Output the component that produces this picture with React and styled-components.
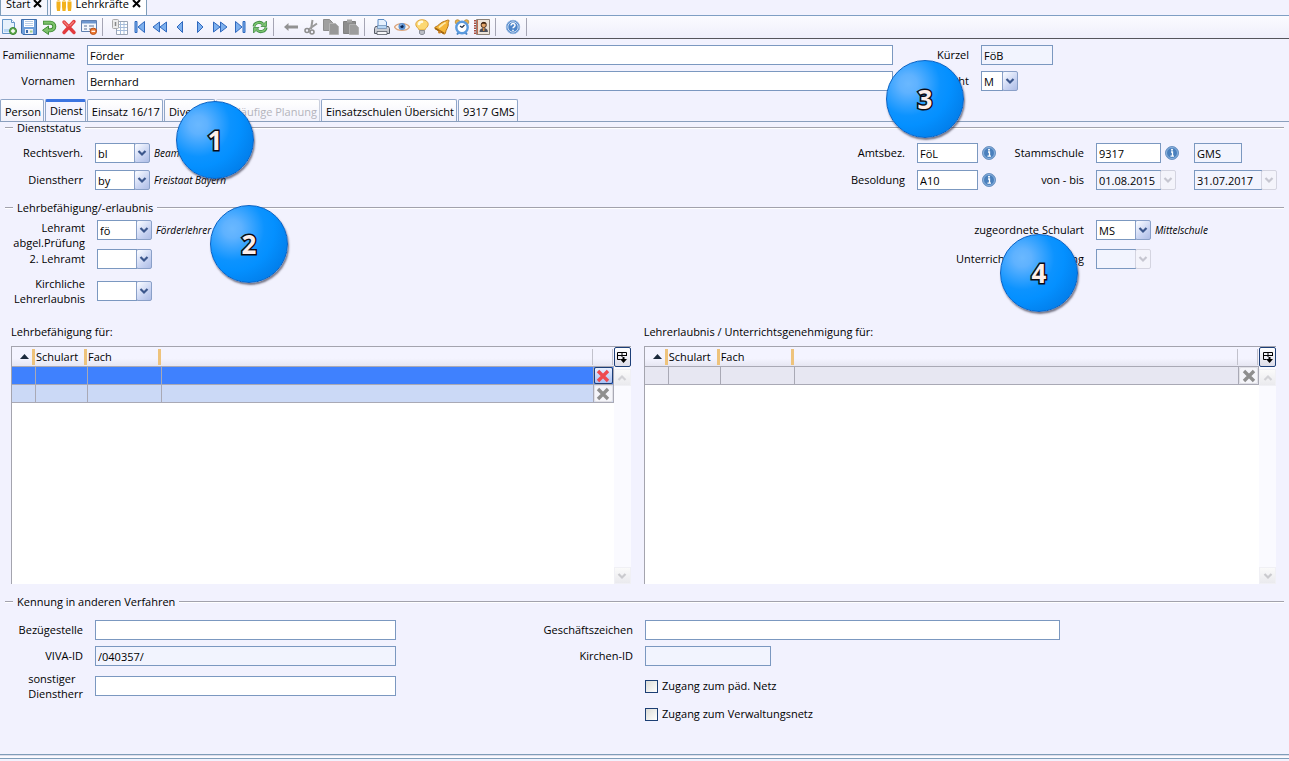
import React from 'react';
import styled, { createGlobalStyle } from 'styled-components';

const GlobalStyle = createGlobalStyle`
  * {
    box-sizing: border-box;
  }
  body {
    margin: 0;
    background: #f2f2fe;
  }
  body, input, select, button, table {
    font-family: "Open Sans", "Noto Sans", sans-serif;
    font-size: 11px;
    color: #000;
  }
`;

const Page = styled.div`
  position: relative;
  min-height: 100vh;
  display: flex;
  flex-direction: column;
  overflow: hidden;
`;

/* open windows */
const WindowTabs = styled.nav`
  display: flex;
  align-items: flex-end;
  gap: 2px;
  height: 15px;
  overflow: hidden;
`;
const WindowTab = styled.div`
  display: flex;
  align-items: center;
  gap: 3px;
  height: 24px;
  padding: 0 5px;
  background: ${({ $active }) => ($active ? '#fff' : '#f6f6fd')};
  border: 1px solid #7f9db9;
  border-bottom: none;
`;
const CloseButton = styled.button`
  display: flex;
  padding: 0;
  border: none;
  background: none;
`;

/* toolbar */
const Toolbar = styled.div`
  display: flex;
  align-items: center;
  height: 24px;
  border-top: 1px solid #7f9fc4;
  border-bottom: 1px solid #55555c;
  background: linear-gradient(#fbfbff, #efeffb);
`;
const ToolButton = styled.button`
  display: flex;
  align-items: center;
  justify-content: flex-start;
  width: 20px;
  height: 20px;
  padding: 0 0 0 1px;
  border: none;
  background: none;
`;
const Separator = styled.span`
  width: 1px;
  height: 18px;
  margin: 0 8px 0 2px;
  background: #a5a5b4;
`;

/* form parts */
const HeaderForm = styled.div`
  display: grid;
  grid-template-columns: 75px minmax(0, 1fr) 64px 308px;
  column-gap: 12px;
  row-gap: 6px;
  padding: 6px 0 8px;
`;
const Label = styled.label`
  justify-self: end;
  align-self: ${({ $stacked }) => ($stacked ? 'center' : 'auto')};
  text-align: ${({ $left }) => ($left ? 'left' : 'right')};
  line-height: ${({ $stacked }) => ($stacked ? '15px' : '20px')};
  white-space: nowrap;
`;
const TextInput = styled.input`
  width: ${({ $width }) => $width || '100%'};
  max-width: 100%;
  height: 20px;
  padding: 0 2px;
  border: 1px solid #7b98c0;
  border-radius: 0;
  outline: none;
  background: ${({ readOnly }) => (readOnly ? '#f2f4fe' : '#fff')};
`;
const Field = styled.div`
  display: flex;
  align-items: center;
  align-self: ${({ $center }) => ($center ? 'center' : 'auto')};
  gap: ${({ $tight }) => ($tight ? '3px' : '4px')};
  height: 20px;
`;
const ComboWrap = styled.span`
  display: grid;
  width: ${({ $width }) => $width};
  height: 20px;
`;
const ComboSelect = styled.select`
  grid-area: 1 / 1;
  appearance: none;
  width: calc(100% - 15px);
  height: 20px;
  padding: 0 2px;
  border: 1px solid #7b98c0;
  border-radius: 0;
  outline: none;
  opacity: 1;
  color: #000;
  background: ${({ disabled }) => (disabled ? '#f2f4fe' : '#fff')};
`;
const ComboArrow = styled.span`
  grid-area: 1 / 1;
  justify-self: end;
  display: flex;
  align-items: center;
  justify-content: center;
  width: 16px;
  height: 20px;
  pointer-events: none;
  border: 1px solid ${({ $off }) => ($off ? '#d4d4e0' : '#8aa0c8')};
  border-radius: 2px;
  background: ${({ $off }) =>
    $off ? '#f4f4fb' : 'linear-gradient(135deg, #f4f7ff 10%, #c9d4f2 60%, #aebde6)'};
`;
const Hint = styled.span`
  font-size: 10px;
  font-style: italic;
  white-space: nowrap;
`;
const InfoButton = styled.button`
  display: flex;
  padding: 0;
  border: none;
  background: none;
`;

/* register tabs */
const TabBar = styled.div`
  display: flex;
  gap: 1px;
  height: 22px;
`;
const Tab = styled.button`
  height: 22px;
  padding: ${({ $active }) => ($active ? '0 2px 3px 4px' : '2px 2px 0 4px')};
  border: 1px solid #8fa6c8;
  border-bottom: none;
  border-top: ${({ $active }) => ($active ? '3px solid #3b74e0' : '1px solid #8fa6c8')};
  border-radius: 2px 2px 0 0;
  background: ${({ $active }) => ($active ? '#f4f4ff' : 'linear-gradient(#fff, #f2f2fb)')};
  white-space: nowrap;

  &:disabled {
    color: #b4b4bc;
    border-color: #c9cfdd;
  }
`;
const Pane = styled.main`
  flex: 1;
  display: flex;
  flex-direction: column;
  gap: 12px;
  border-top: 1px solid #8a9fbd;
`;

const Section = styled.fieldset`
  min-width: 0;
  margin: 0;
  padding: 0 0 0 5px;
  border: none;
`;
const Legend = styled.legend`
  width: 100%;
  padding: 0 5px 1px 0;
`;
const LegendRow = styled.span`
  display: flex;
  align-items: center;
  gap: 4px;
  line-height: 12px;

  &::before,
  &::after {
    content: "";
    width: 8px;
    height: 1px;
    background: #a2a2ac;
    border-bottom: 1px solid #fff;
  }
  &::after {
    flex: 1;
  }
`;
const StatusGrid = styled.div`
  display: grid;
  grid-template-columns: 78px minmax(0, 1fr) 80px 80px 75px 86px 95px;
  column-gap: 12px;
  row-gap: 7px;
  padding-top: 8px;
`;
const TeachingGrid = styled.div`
  display: grid;
  grid-template-columns: 80px minmax(0, 1fr) 150px 193px;
  grid-template-rows: 29px 27px 30px;
  column-gap: 12px;
  align-items: start;
  padding-top: 5px;
`;
const IdGrid = styled.div`
  display: grid;
  grid-template-columns: 78px minmax(0, 301px) 225px minmax(0, 1fr);
  grid-template-rows: 20px 20px 28px 16px;
  column-gap: 12px;
  row-gap: 6px;
  align-items: center;
  padding-top: 11px;
`;
const CheckLabel = styled.label`
  grid-column: 4;
  display: flex;
  align-items: center;
  gap: 4px;
  line-height: 14px;
`;
const CheckBox = styled.input`
  appearance: none;
  width: 13px;
  height: 13px;
  margin: 0;
  border: 1px solid #1c3f74;
  background: linear-gradient(135deg, #dcdcd6, #fff);
`;

/* subject lists */
const Lists = styled.div`
  display: grid;
  grid-template-columns: 49fr 50fr;
  gap: 13px;
  padding: 6px 13px 0 11px;
`;
const ListTitle = styled.h2`
  margin: 0 0 6px;
  font-size: 11px;
  font-weight: 400;
  line-height: 16px;
`;
const ListBox = styled.div`
  display: flex;
  align-items: flex-start;
  height: 238px;
  border-left: 1px solid #a4a4ae;
  border-top: 1px solid #a4a4ae;
  background: #fff;
`;
const Table = styled.table`
  flex: 1;
  min-width: 0;
  table-layout: fixed;
  border-spacing: 0;
`;
const HeadCell = styled.th`
  width: ${({ $width }) => $width};
  height: 20px;
  padding: 0 1px 0 0;
  font-weight: 400;
  text-align: left;
  line-height: 14px;
  white-space: nowrap;
  background: linear-gradient(#f4f4ff 60%, #e6e6f2);
  border-bottom: 1px solid #a9a9b5;
`;
const HeadInner = styled.span`
  display: flex;
  align-items: center;
  justify-content: ${({ $end }) => ($end ? 'flex-end' : 'space-between')};
  gap: 3px;
  height: 16px;
  border-right: ${({ $bar }) =>
    $bar === 'orange' ? '3px solid #eec37c' : '1px solid #c2c2cc'};
`;
const Cell = styled.td`
  height: 18px;
  padding: 0;
  border-right: 1px solid #a9a9b5;
  border-bottom: 1px solid #a9a9b5;
`;
const Row = styled.tr`
  background: ${({ $tone }) =>
    ({ selected: '#3f81fe', light: '#cbd9f6', plain: '#e7e7f2' })[$tone]};
`;
const DeleteButton = styled.button`
  display: flex;
  align-items: center;
  justify-content: center;
  width: 100%;
  height: 17px;
  padding: 0;
  border: 1px solid ${({ $active }) => ($active ? '#1d3f78' : '#e0e0e6')};
  border-radius: 2px;
  background: ${({ $active }) => ($active ? 'linear-gradient(#e8efff, #a9c1f4)' : '#f5f5fa')};
`;
const ScrollBar = styled.div`
  display: flex;
  flex-direction: column;
  justify-content: space-between;
  width: 17px;
  height: 100%;
  background: #fafaff;
`;
const PickerButton = styled.button`
  display: flex;
  align-items: center;
  justify-content: center;
  width: 17px;
  height: 20px;
  padding: 0;
  border: 1px solid #1d3f78;
  border-radius: 2px;
  background: linear-gradient(#fff, #dcdce8);
`;
const ScrollButton = styled.button`
  display: flex;
  align-items: center;
  justify-content: center;
  width: 17px;
  height: 17px;
  padding: 0;
  border: 1px solid #f0f0f5;
  background: linear-gradient(#fafafa, #eaeaee);
`;
const ScrollTop = styled.div`
  display: flex;
  flex-direction: column;
  gap: 2px;
`;

const StatusBar = styled.footer`
  height: 7px;
  border-top: 1px solid #7f9db9;
  background: linear-gradient(#dcdcea 0 1px, #fafaff 1px 3px, #7f9db9 3px 4px, #f2f2fe 4px);
`;

/* numbered callouts lie over the form */
const Marker = styled.span`
  position: absolute;
  top: ${({ $top }) => $top};
  left: ${({ $left }) => $left || 'auto'};
  right: ${({ $right }) => $right || 'auto'};
  display: flex;
  align-items: center;
  justify-content: center;
  width: 78px;
  height: 78px;
  border: 1px solid #0a62c4;
  border-radius: 50%;
  background: radial-gradient(circle at 28% 30%, #6ab8ff 0, #5fb2ff 12%, #0c93ff 42%, #0490ff 55%, #0070da 100%);
  box-shadow: 1px 2px 2px rgba(40, 40, 60, 0.6);
  color: #fdeeea;
  font-size: 26px;
  font-weight: 700;
  line-height: 26px;
  -webkit-text-stroke: 3px #0b0b14;
  paint-order: stroke fill;
`;

const Svg = ({ children, size = 16 }) => (
  <svg width={size} height={size} viewBox="0 0 16 16" fill="none" aria-hidden="true">
    {children}
  </svg>
);

const NavShape = ({ d, bar }) => (
  <Svg>
    <path d={d} fill="#7db0ee" stroke="#2f68bd" strokeWidth="1" strokeLinejoin="round" />
    {bar && <path d={bar} fill="#7db0ee" stroke="#2f68bd" strokeWidth="1" />}
  </Svg>
);

const icons = {
  new: (
    <Svg>
      <path d="M1.5 .5h9l3 3v11h-12z" fill="#e6f1fc" stroke="#6495c8" />
      <path d="M10.5.5v3h3" fill="#fff" stroke="#6495c8" />
      <path d="M3 10h9v3H3z" fill="#b9d7f5" />
      <circle cx="12" cy="12" r="3.500" fill="#6ab256" stroke="#34802d" />
      <path d="M12 10v4M10 12h4" stroke="#fff" strokeWidth="1.400" />
    </Svg>
  ),
  save: (
    <Svg>
      <path d="M.5.5h15v15H2l-1.500-1.500z" fill="#6f9fdb" stroke="#3c6cab" />
      <path d="M3 1h10v7H3z" fill="#fff" />
      <path d="M4 2.500h8M4 4.500h8M4 6.500h8" stroke="#b9cde6" />
      <path d="M4 10h8v5H4z" fill="#f0f2f6" />
      <path d="M5 11h2v3H5z" fill="#3d6cab" />
      <path d="M9 11.500h2.500v2H9z" fill="#a6d38c" />
    </Svg>
  ),
  undo: (
    <Svg>
      <path d="M2 3.700h7.500a3.800 3.800 0 0 1 0 7.600H7" stroke="#3f8b35" strokeWidth="4" />
      <path d="M7.500 7v8.500L1.500 11.300z" fill="#7cc26a" stroke="#3f8b35" />
      <path d="M2.700 3.700h6.800a3.800 3.800 0 0 1 0 7.600H6" stroke="#7cc26a" strokeWidth="2.200" />
    </Svg>
  ),
  remove: (
    <Svg>
      <path d="M3 3l10 10.500M13 2.500L3 13.500" stroke="#e23b3e" strokeWidth="3.400" strokeLinecap="round" />
      <path d="M3 3l4 4M12.500 3L9 6.500" stroke="#f2807c" strokeWidth="1.200" strokeLinecap="round" />
    </Svg>
  ),
  formRemove: (
    <Svg>
      <path d="M.5 1.500h15v11H.5z" fill="#f4f7fc" stroke="#6080b0" />
      <path d="M1 2h14v2.500H1z" fill="#6d96cf" />
      <path d="M3 7h3M8 7h5M3 10h3M8 10h2" stroke="#8c9db8" strokeWidth="1.500" />
      <circle cx="12.300" cy="12.300" r="3.200" fill="#ee7a31" stroke="#b8501a" />
      <path d="M10.500 12.300h3.600" stroke="#fff" strokeWidth="1.300" />
    </Svg>
  ),
  list: (
    <Svg>
      <path d="M4.500 2.500h11v13h-11z" fill="#fff" stroke="#9aa4b4" />
      <path d="M5 5.500h10M5 8.500h10M5 11.500h10M8.500 3v12M12 3v12" stroke="#a6bcda" />
      <rect x=".5" y=".5" width="6" height="9" rx="1" fill="#ececec" stroke="#a9a9a9" />
      <path d="M3.500 3v4" stroke="#888" strokeWidth="1.500" />
    </Svg>
  ),
  first: <NavShape bar="M3 2.500h2v11H3z" d="M12.500 2.500v11L6 8z" />,
  rewind: <NavShape d="M7.500 3v10L1 8zM14.500 3v10L8 8z" />,
  prev: <NavShape d="M10.500 2.500v11L5 8z" />,
  next: <NavShape d="M5.500 2.500v11L11 8z" />,
  forward: <NavShape d="M1.500 3v10L8 8zM8.500 3v10L15 8z" />,
  last: <NavShape bar="M11 2.500h2v11h-2z" d="M3.500 2.500v11L10 8z" />,
  refresh: (
    <Svg>
      <path d="M2 7.500c.5-4 6-5.500 9-2.500" stroke="#3f8b45" strokeWidth="3" />
      <path d="M14.500 2v5.500H9z" fill="#7cc570" stroke="#3f8b45" strokeWidth=".8" />
      <path d="M2.300 7.300c.5-3.800 5.700-5.100 8.700-2.300" stroke="#7cc570" strokeWidth="1.500" />
      <path d="M14 8.500c-.5 4-6 5.500-9 2.500" stroke="#3f8b45" strokeWidth="3" />
      <path d="M1.500 14V8.500H7z" fill="#7cc570" stroke="#3f8b45" strokeWidth=".8" />
      <path d="M13.700 8.700c-.5 3.800-5.700 5.100-8.700 2.300" stroke="#7cc570" strokeWidth="1.500" />
    </Svg>
  ),
  back: (
    <Svg>
      <path d="M1 8l4.500-4v2.500H15v3H5.500V12z" fill="#929292" />
    </Svg>
  ),
  cut: (
    <Svg>
      <path d="M9.500 1L8 10M14 4.500L5.500 10.500" stroke="#9a9a9a" strokeWidth="2" />
      <circle cx="4" cy="11.500" r="2" stroke="#8d8d8d" strokeWidth="1.600" />
      <circle cx="9" cy="13" r="2" stroke="#8d8d8d" strokeWidth="1.600" />
    </Svg>
  ),
  copy: (
    <Svg>
      <path d="M.5.5h6l3 3v8h-9z" fill="#a0a0a0" stroke="#8c8c8c" />
      <path d="M6.500 4.500h6l3 3v8h-9z" fill="#989898" stroke="#b4b4b4" />
    </Svg>
  ),
  paste: (
    <Svg>
      <path d="M.5 2.500h12v12H.5z" fill="#8d8d8d" stroke="#808080" />
      <path d="M4 .5h5v3H4z" fill="#a5a5a5" />
      <path d="M6.500 5.500h6l3 3v7h-9z" fill="#9d9d9d" stroke="#b0b0b0" />
    </Svg>
  ),
  print: (
    <Svg>
      <path d="M4 .5h6l2.500 2.500v6H4z" fill="#e6f1fd" stroke="#5b8bc5" />
      <path d="M1.500 7.500h13l1 2v5H.5v-5z" fill="#c9ccd2" stroke="#565b66" />
      <path d="M3.500 6.500h9v3h-9z" fill="#b7d7f5" stroke="#6a8ab0" strokeWidth=".7" />
      <path d="M3 12.500h10v3H3z" fill="#f6f6f8" stroke="#565b66" strokeWidth=".8" />
    </Svg>
  ),
  eye: (
    <Svg>
      <path d="M.5 8C3 3.500 13 3.500 15.500 8 13 12.500 3 12.500.5 8z" fill="#fdf3ea" stroke="#dba67e" strokeWidth="1.400" />
      <circle cx="8" cy="7.500" r="3.500" fill="#5c92d3" />
      <circle cx="8" cy="7.500" r="1.600" fill="#0c2450" />
      <path d="M6.500 6h1" stroke="#fff" />
    </Svg>
  ),
  bulb: (
    <Svg>
      <path d="M8 .8c4.200 0 6.200 2.300 6.200 4.600 0 2.600-2.600 3.400-3.400 5.600H5.200C4.400 8.800 1.800 8 1.800 5.400 1.800 3.100 3.800.8 8 .8z" fill="#fcd873" stroke="#dca13a" />
      <path d="M5 5c.3-1.500 1.500-2.300 3-2.300" stroke="#fffbe6" strokeWidth="2.600" strokeLinecap="round" />
      <path d="M5.500 11.500h5v3l-1.500 1H7l-1.500-1z" fill="#b9bcc4" stroke="#777c88" strokeWidth=".8" />
    </Svg>
  ),
  bell: (
    <Svg>
      <path d="M14.800 1.200c-1.500-.6-2.300.6-4 1C6.500 3 4.500 7 1 8.200c-.6.600-.3 1.300.4 1.700l8.300 4.900c.8.400 1.500.2 1.700-.6.300-3.700 3.300-5.700 2.900-9.700-.1-1.600 1.200-2.400.5-3.300z" fill="#f5b638" stroke="#b5761a" />
      <path d="M1.200 9.200l9 5.300" stroke="#9f6412" strokeWidth="1.600" />
      <circle cx="5.500" cy="13" r="1.500" fill="#c97f22" />
      <path d="M5.500 8c2-1.200 3.200-3.200 5.500-4" stroke="#fde9a8" strokeWidth="1.800" strokeLinecap="round" />
    </Svg>
  ),
  clock: (
    <Svg>
      <circle cx="3.500" cy="3" r="2.300" fill="#e9b04a" stroke="#a87c2c" strokeWidth=".7" />
      <circle cx="12.500" cy="3" r="2.300" fill="#e9b04a" stroke="#a87c2c" strokeWidth=".7" />
      <path d="M3 15.500l2-2.500M13 15.500l-2-2.500" stroke="#4b84c4" strokeWidth="2" />
      <circle cx="8" cy="8.500" r="5.700" fill="#fff" stroke="#5a9ade" strokeWidth="2.400" />
      <path d="M8 8.500L10.500 6M8 8.500L6 7" stroke="#22334c" strokeWidth="1.200" />
    </Svg>
  ),
  contact: (
    <Svg>
      <path d="M2.500.5h13v15h-13z" fill="#ece4da" stroke="#8b8178" />
      <path d="M1 1v14.500" stroke="#a33a2b" strokeWidth="1.800" strokeDasharray="1.500 1" />
      <path d="M3.500 1v14" stroke="#c1694f" />
      <circle cx="9.700" cy="6" r="2.600" fill="#e0a468" stroke="#53331d" />
      <path d="M7 4.700c1-2.400 5-2.400 5.500 0z" fill="#40240f" />
      <path d="M5.500 13c0-3 2-4 4.200-4s4.200 1 4.200 4z" fill="#4b4e5a" />
      <path d="M9.700 9v3" stroke="#d98a3a" strokeWidth="1.500" />
    </Svg>
  ),
  help: (
    <Svg>
      <circle cx="8" cy="8" r="6.700" fill="#4d85c9" stroke="#8fb2de" />
      <circle cx="8" cy="8" r="5.200" stroke="#dbe8f7" strokeWidth=".9" />
      <path d="M6 6.500c0-2.700 4.200-2.500 4 0-.1 1.300-2 1.300-2 2.800M8 10.700v1.300" stroke="#fff" strokeWidth="1.500" />
    </Svg>
  ),
};

const toolGroups = [
  [['new', 'Neu'], ['save', 'Speichern'], ['undo', 'Rückgängig'], ['remove', 'Löschen'], ['formRemove', 'Maske leeren']],
  [['list', 'Liste'], ['first', 'Erster'], ['rewind', 'Zurückspulen'], ['prev', 'Vorheriger'], ['next', 'Nächster'], ['forward', 'Vorspulen'], ['last', 'Letzter'], ['refresh', 'Aktualisieren']],
  [['back', 'Zurück'], ['cut', 'Ausschneiden'], ['copy', 'Kopieren'], ['paste', 'Einfügen']],
  [['print', 'Drucken'], ['eye', 'Ansicht'], ['bulb', 'Hinweis'], ['bell', 'Meldungen'], ['clock', 'Wiedervorlage'], ['contact', 'Adressbuch']],
  [['help', 'Hilfe']],
];

const CloseIcon = () => (
  <svg width="9" height="9" viewBox="0 0 9 9" aria-hidden="true">
    <path d="M1 1l7 7M8 1L1 8" stroke="#000" strokeWidth="2" />
  </svg>
);

const PeopleIcon = () => (
  <svg width="16" height="14" viewBox="0 0 16 14" fill="#f3b21c" aria-hidden="true">
    <circle cx="2.500" cy="2" r="1.800" />
    <circle cx="8" cy="2" r="1.800" />
    <circle cx="13.500" cy="2" r="1.800" />
    <path d="M.5 4.500h4V10l-.5 4H1L.5 10zM6 4.500h4V10l-.5 4h-3L6 10zM11.500 4.500h4V10l-.5 4h-3l-.5-4z" />
  </svg>
);

const Chevron = ({ color, up }) => (
  <svg width="10" height="8" viewBox="0 0 10 8" fill="none" aria-hidden="true">
    <path d={up ? 'M1.500 6L5 2.500 8.500 6' : 'M1.500 2L5 5.500 8.500 2'} stroke={color} strokeWidth="2.200" />
  </svg>
);

const Info = ({ label }) => (
  <InfoButton type="button" aria-label={label}>
    <Svg>
      <circle cx="8" cy="8" r="6.500" fill="#4a80bd" stroke="#6d93c2" />
      <circle cx="8" cy="8" r="5.500" stroke="#9dc0e6" strokeWidth=".8" />
      <path d="M7 7h1.500v4M6.500 11.200h3.500" stroke="#fff" strokeWidth="1.300" />
      <circle cx="8" cy="4.700" r="1" fill="#fff" />
    </Svg>
  </InfoButton>
);

const Combo = ({ id, value = '', width = '55px', disabled, label }) => (
  <ComboWrap $width={width}>
    <ComboSelect id={id} defaultValue={value} disabled={disabled} aria-label={label}>
      <option value={value}>{value}</option>
    </ComboSelect>
    <ComboArrow $off={disabled}>
      <Chevron color={disabled ? '#c6c6d0' : '#3c578c'} />
    </ComboArrow>
  </ComboWrap>
);

const Group = ({ title, children }) => (
  <Section>
    <Legend>
      <LegendRow>{title}</LegendRow>
    </Legend>
    {children}
  </Section>
);

const SubjectList = ({ title, rows }) => (
  <section>
    <ListTitle>{title}</ListTitle>
    <ListBox>
      <Table aria-label={title}>
        <thead>
          <tr>
            <HeadCell $width="24px">
              <HeadInner $bar="orange" $end>
                <svg width="9" height="5" viewBox="0 0 9 5" aria-hidden="true">
                  <path d="M0 5L4.500 0 9 5z" fill="#1b2a3c" />
                </svg>
                <span />
              </HeadInner>
            </HeadCell>
            <HeadCell $width="52px"><HeadInner $bar="orange">Schulart</HeadInner></HeadCell>
            <HeadCell $width="74px"><HeadInner $bar="orange">Fach</HeadInner></HeadCell>
            <HeadCell><HeadInner /></HeadCell>
            <HeadCell $width="20px"><HeadInner /></HeadCell>
          </tr>
        </thead>
        <tbody>
          {rows.map((tone) => (
            <Row key={tone} $tone={tone}>
              <Cell />
              <Cell />
              <Cell />
              <Cell />
              <Cell>
                <DeleteButton type="button" $active={tone === 'selected'} aria-label="Zeile löschen">
                  <svg width="14" height="14" viewBox="0 0 14 14" aria-hidden="true">
                    <path
                      d="M2 2l10 10M12 2L2 12"
                      stroke={tone === 'selected' ? '#ee4a50' : '#8e8e8e'}
                      strokeWidth="3.400"
                    />
                  </svg>
                </DeleteButton>
              </Cell>
            </Row>
          ))}
        </tbody>
      </Table>
      <ScrollBar>
        <ScrollTop>
          <PickerButton type="button" aria-label="Spalten wählen">
            <svg width="12" height="13" viewBox="0 0 12 13" fill="none" aria-hidden="true">
              <path d="M4.500 8.500h-3v-7h9V5M1.500 4.500h9M6 1.500V6" stroke="#000" strokeWidth="1" />
              <path d="M7.500 6v3" stroke="#000" strokeWidth="2" />
              <path d="M4 8h7l-3.500 4z" fill="#000" />
            </svg>
          </PickerButton>
          <ScrollButton type="button" aria-label="Nach oben"><Chevron up color="#d2d2d6" /></ScrollButton>
        </ScrollTop>
        <ScrollButton type="button" aria-label="Nach unten"><Chevron color="#cacace" /></ScrollButton>
      </ScrollBar>
    </ListBox>
  </section>
);

const App = () => {
  return (
    <>
      <GlobalStyle />
      <Page>
        <WindowTabs>
          <WindowTab>
            Start
            <CloseButton type="button" aria-label="Start schließen"><CloseIcon /></CloseButton>
          </WindowTab>
          <WindowTab $active>
            <PeopleIcon />
            Lehrkräfte
            <CloseButton type="button" aria-label="Lehrkräfte schließen"><CloseIcon /></CloseButton>
          </WindowTab>
        </WindowTabs>

        <Toolbar>
          {toolGroups.map((group) => (
            <React.Fragment key={group[0][0]}>
              {group.map(([name, label]) => (
                <ToolButton key={name} type="button" aria-label={label}>{icons[name]}</ToolButton>
              ))}
              <Separator />
            </React.Fragment>
          ))}
        </Toolbar>

        <HeaderForm>
          <Label htmlFor="familienname">Familienname</Label>
          <TextInput id="familienname" defaultValue="Förder" />
          <Label htmlFor="kuerzel">Kürzel</Label>
          <TextInput id="kuerzel" $width="72px" defaultValue="FöB" readOnly />
          <Label htmlFor="vornamen">Vornamen</Label>
          <TextInput id="vornamen" defaultValue="Bernhard" />
          <Label htmlFor="geschlecht">Geschlecht</Label>
          <Combo id="geschlecht" value="M" width="37px" />
        </HeaderForm>

        <TabBar role="tablist">
          <Tab type="button" role="tab">Person</Tab>
          <Tab type="button" role="tab" $active aria-selected="true">Dienst</Tab>
          <Tab type="button" role="tab">Einsatz 16/17</Tab>
          <Tab type="button" role="tab">Diverses</Tab>
          <Tab type="button" role="tab" disabled>vorläufige Planung</Tab>
          <Tab type="button" role="tab">Einsatzschulen Übersicht</Tab>
          <Tab type="button" role="tab">9317 GMS</Tab>
        </TabBar>

        <Pane>
          <Group title="Dienststatus">
            <StatusGrid>
              <Label htmlFor="rechtsverh">Rechtsverh.</Label>
              <Field>
                <Combo id="rechtsverh" value="bl" />
                <Hint>Beamter</Hint>
              </Field>
              <Label htmlFor="amtsbez">Amtsbez.</Label>
              <Field $tight>
                <TextInput id="amtsbez" $width="61px" defaultValue="FöL" />
                <Info label="Info Amtsbezeichnung" />
              </Field>
              <Label htmlFor="stammschule">Stammschule</Label>
              <Field $tight>
                <TextInput id="stammschule" $width="65px" defaultValue="9317" />
                <Info label="Info Stammschule" />
              </Field>
              <TextInput $width="48px" defaultValue="GMS" readOnly aria-label="Schulart Stammschule" />

              <Label htmlFor="dienstherr">Dienstherr</Label>
              <Field>
                <Combo id="dienstherr" value="by" />
                <Hint>Freistaat Bayern</Hint>
              </Field>
              <Label htmlFor="besoldung">Besoldung</Label>
              <Field $tight>
                <TextInput id="besoldung" $width="61px" defaultValue="A10" />
                <Info label="Info Besoldung" />
              </Field>
              <Label htmlFor="von">von - bis</Label>
              <Combo id="von" value="01.08.2015" width="80px" disabled />
              <Combo label="bis" value="31.07.2017" width="83px" disabled />
            </StatusGrid>
          </Group>

          <Group title="Lehrbefähigung/-erlaubnis">
            <TeachingGrid>
              <Label htmlFor="lehramt" $stacked>Lehramt<br />abgel.Prüfung</Label>
              <Field>
                <Combo id="lehramt" value="fö" />
                <Hint>Förderlehrer</Hint>
              </Field>
              <Label htmlFor="schulart">zugeordnete Schulart</Label>
              <Field>
                <Combo id="schulart" value="MS" />
                <Hint>Mittelschule</Hint>
              </Field>

              <Label htmlFor="lehramt2">2. Lehramt</Label>
              <Combo id="lehramt2" />
              <Label htmlFor="genehmigung">Unterrichtsgenehmigung</Label>
              <Combo id="genehmigung" disabled />

              <Label htmlFor="kirchlich" $stacked>Kirchliche<br />Lehrerlaubnis</Label>
              <Field $center>
                <Combo id="kirchlich" />
              </Field>
            </TeachingGrid>
          </Group>

          <Lists>
            <SubjectList title="Lehrbefähigung für:" rows={['selected', 'light']} />
            <SubjectList title="Lehrerlaubnis / Unterrichtsgenehmigung für:" rows={['plain']} />
          </Lists>

          <Group title="Kennung in anderen Verfahren">
            <IdGrid>
              <Label htmlFor="bezuegestelle">Bezügestelle</Label>
              <TextInput id="bezuegestelle" />
              <Label htmlFor="geschaeftszeichen">Geschäftszeichen</Label>
              <TextInput id="geschaeftszeichen" $width="415px" />

              <Label htmlFor="viva">VIVA-ID</Label>
              <TextInput id="viva" defaultValue="/040357/" readOnly />
              <Label htmlFor="kirchenid">Kirchen-ID</Label>
              <TextInput id="kirchenid" $width="126px" readOnly />

              <Label htmlFor="sonstiger" $stacked $left>sonstiger<br />Dienstherr</Label>
              <TextInput id="sonstiger" />
              <CheckLabel>
                <CheckBox type="checkbox" />
                Zugang zum päd. Netz
              </CheckLabel>
              <CheckLabel>
                <CheckBox type="checkbox" />
                Zugang zum Verwaltungsnetz
              </CheckLabel>
            </IdGrid>
          </Group>
        </Pane>

        <StatusBar />

        <Marker $top="101px" $left="176px">1</Marker>
        <Marker $top="205px" $left="210px">2</Marker>
        <Marker $top="60px" $right="325px">3</Marker>
        <Marker $top="234px" $right="211px">4</Marker>
      </Page>
    </>
  );
};

export default App;
